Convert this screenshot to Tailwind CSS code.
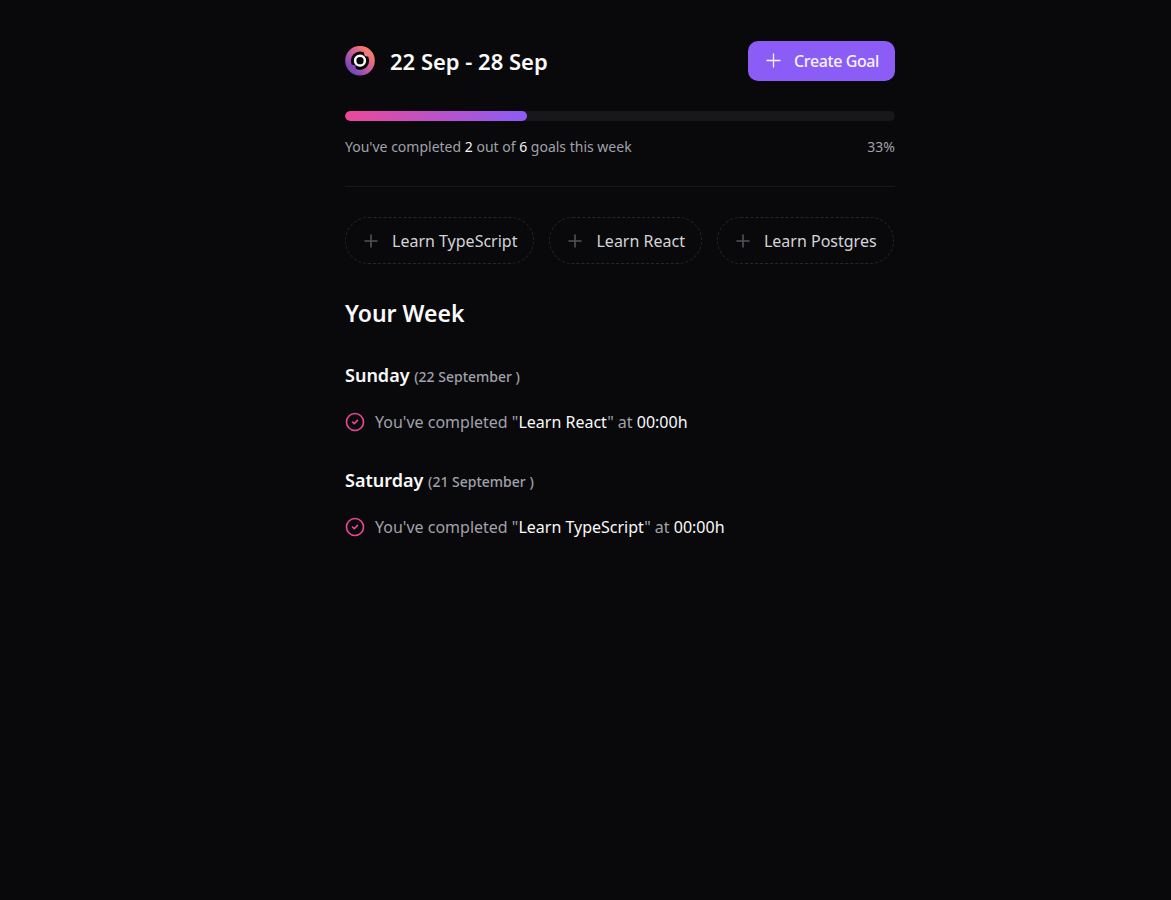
<!DOCTYPE html>
<html lang="en">
<head>
<meta charset="utf-8">
<meta name="viewport" content="width=device-width, initial-scale=1">
<title>Weekly goals</title>
<script src="https://cdn.jsdelivr.net/npm/@tailwindcss/browser@4"></script>
</head>
<body class="min-h-screen bg-[#09090b] pl-[69px] font-['Segoe_UI','Noto_Sans',sans-serif] text-zinc-50 antialiased">
<main class="mx-auto flex max-w-[550px] flex-col pt-[41px]">
  <header class="flex h-10 items-center justify-between">
    <div class="flex items-center gap-[15px]">
      <svg class="size-[30px]" viewBox="0 0 30 30" aria-hidden="true">
        <defs>
          <linearGradient id="ring" x1="4" y1="25" x2="25" y2="4" gradientUnits="userSpaceOnUse"><stop stop-color="#6a45bd"/><stop offset=".5" stop-color="#c65aa0"/><stop offset="1" stop-color="#ff7f62"/></linearGradient>
        </defs>
        <circle cx="15" cy="14.700" r="12" fill="none" stroke="url(#ring)" stroke-width="5.600"/>
        <circle cx="22.300" cy="7.300" r="3.200" fill="#ee7c80"/>
        <circle cx="7.700" cy="22" r="3.200" fill="#7d4bb0"/>
        <circle cx="15" cy="14.700" r="4.900" fill="none" stroke="#fff" stroke-width="2.500"/>
      </svg>
      <h1 class="text-[22px] leading-8 font-semibold">22 Sep - 28 Sep</h1>
    </div>
    <button type="button" class="flex h-10 items-center gap-[10px] rounded-[10px] bg-[#8b5cf6] px-4 text-base font-medium tracking-tight text-violet-50">
      <svg class="size-5" viewBox="0 0 20 20" fill="none" stroke="currentColor" stroke-width="1.300" stroke-linecap="round" aria-hidden="true"><path d="M3 9.500h13M9.500 3v13"/></svg>
      Create Goal
    </button>
  </header>

  <section class="mt-[30px]">
    <div class="h-[10px] overflow-hidden rounded-full bg-[#18181b]" role="progressbar" aria-label="Weekly progress" aria-valuenow="33" aria-valuemin="0" aria-valuemax="100">
      <div class="h-full rounded-full bg-linear-to-r/srgb from-[#ec4899] to-[#8b5cf6]" style="width:33%"></div>
    </div>
    <div class="mt-4 flex justify-between text-sm leading-5 text-[#a1a1aa]">
      <span>You've completed <span class="text-zinc-100">2</span> out of <span class="text-zinc-100">6</span> goals this week</span>
      <span>33%</span>
    </div>
  </section>

  <hr class="mt-[29px] border-[#18181b]">

  <div class="mt-[30px] flex flex-wrap gap-[15px]">
    <button type="button" class="flex h-[47px] items-center gap-[10px] rounded-full border border-dashed border-[#27272a] px-4 text-base text-[#d4d4d8]"><svg class="size-5 text-[#52525b]" viewBox="0 0 20 20" fill="none" stroke="currentColor" stroke-width="1.600" stroke-linecap="round" aria-hidden="true"><path d="M3 10h12M9 4v12"/></svg>Learn TypeScript</button>
    <button type="button" class="flex h-[47px] items-center gap-[10px] rounded-full border border-dashed border-[#27272a] px-4 text-base text-[#d4d4d8]"><svg class="size-5 text-[#52525b]" viewBox="0 0 20 20" fill="none" stroke="currentColor" stroke-width="1.600" stroke-linecap="round" aria-hidden="true"><path d="M3 10h12M9 4v12"/></svg>Learn React</button>
    <button type="button" class="flex h-[47px] items-center gap-[10px] rounded-full border border-dashed border-[#27272a] px-4 text-base text-[#d4d4d8]"><svg class="size-5 text-[#52525b]" viewBox="0 0 20 20" fill="none" stroke="currentColor" stroke-width="1.600" stroke-linecap="round" aria-hidden="true"><path d="M3 10h12M9 4v12"/></svg>Learn Postgres</button>
  </div>

  <section class="mt-[30px] flex flex-col gap-[30px]">
    <h2 class="text-[23px] leading-[38px] font-semibold">Your Week</h2>
    <div class="flex flex-col gap-[19px]">
      <h3 class="text-lg leading-[26px] font-semibold">Sunday <span class="text-sm font-medium text-[#a1a1aa]">(22 September )</span></h3>
      <ul>
        <li class="flex items-center gap-[10px] leading-[30px] text-[#a1a1aa]">
          <svg class="size-5 text-[#ec4899]" viewBox="0 0 20 20" fill="none" stroke="currentColor" stroke-width="1.600" stroke-linecap="round" stroke-linejoin="round" aria-hidden="true"><circle cx="10" cy="10" r="8.500"/><path d="m7.500 10 1.700 1.700 3.300-3.300"/></svg>
          <span>You've completed "<span class="text-zinc-50">Learn React</span>" at <span class="text-zinc-50">00:00h</span></span>
        </li>
      </ul>
    </div>
    <div class="flex flex-col gap-[19px]">
      <h3 class="text-lg leading-[26px] font-semibold">Saturday <span class="text-sm font-medium text-[#a1a1aa]">(21 September )</span></h3>
      <ul>
        <li class="flex items-center gap-[10px] leading-[30px] text-[#a1a1aa]">
          <svg class="size-5 text-[#ec4899]" viewBox="0 0 20 20" fill="none" stroke="currentColor" stroke-width="1.600" stroke-linecap="round" stroke-linejoin="round" aria-hidden="true"><circle cx="10" cy="10" r="8.500"/><path d="m7.500 10 1.700 1.700 3.300-3.300"/></svg>
          <span>You've completed "<span class="text-zinc-50">Learn TypeScript</span>" at <span class="text-zinc-50">00:00h</span></span>
        </li>
      </ul>
    </div>
  </section>
</main>
</body>
</html>
